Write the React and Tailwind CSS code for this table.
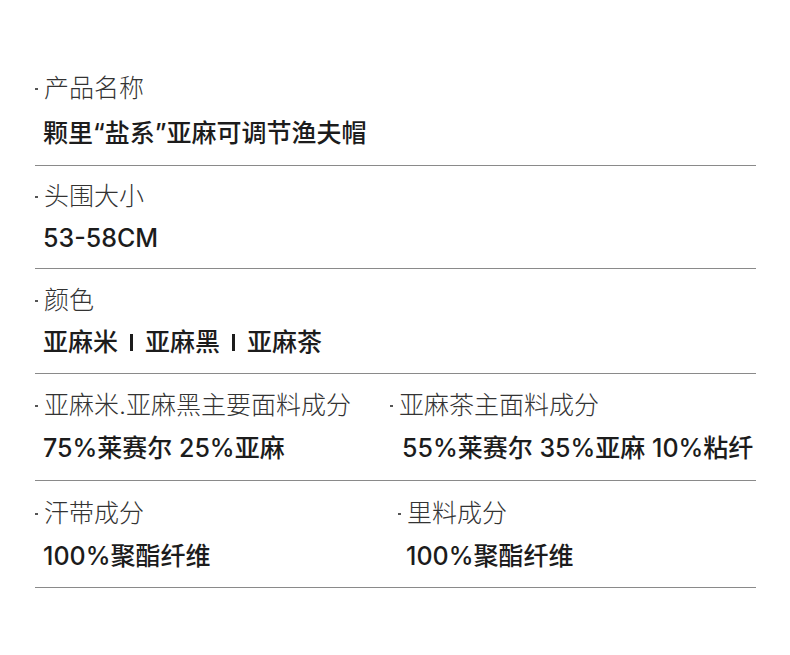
import React from 'react';

const font = { fontFamily: 'Inter, "Noto Sans CJK SC", sans-serif' };

const Label = ({ children }) => (
    <div className="flex items-center text-[25px] leading-[24px] font-light text-[#333]">
        <span className="w-[3px] h-[2px] bg-[#555] mr-[6px] mt-[1px]"></span>
        <span>{children}</span>
    </div>
);

const Value = ({ children }) => (
    <div className="text-[25px] leading-[24px] font-medium text-[#1c1c1c] whitespace-nowrap">{children}</div>
);

const Bar = () => <span className="block w-[3px] h-[17px] mx-[12px] mt-[1px] bg-[#1c1c1c]"></span>;

const App = () => {
    return (
        <div className="w-[790px] h-[655px] bg-white" style={font}>
            <div className="ml-[35px] w-[721px] pt-[76px]">
                {/* 产品名称 */}
                <div className="flex flex-col gap-[21px] pb-[20px] border-b border-[#8a8a8a]">
                    <Label>产品名称</Label>
                    <div className="pl-[8px]"><Value>颗里“盐系”亚麻可调节渔夫帽</Value></div>
                </div>

                <div className="flex flex-col gap-[18px] pt-[18px] pb-[18px] border-b border-[#8a8a8a]">
                    <Label>头围大小</Label>
                    <div className="pl-[8px]"><Value>53-58CM</Value></div>
                </div>

                <div className="flex flex-col gap-[18px] pt-[19px] pb-[19px] border-b border-[#8a8a8a]">
                    <Label>颜色</Label>
                    <div className="pl-[8px] flex items-center text-[25px] leading-[24px] font-medium text-[#1c1c1c]">
                        <span>亚麻米</span>
                        <Bar />
                        <span>亚麻黑</span>
                        <Bar />
                        <span>亚麻茶</span>
                    </div>
                </div>

                {/* 面料成分 */}
                <div className="grid grid-cols-[355px_1fr] pt-[19px] pb-[20px] border-b border-[#8a8a8a]">
                    <div className="flex flex-col gap-[19px]">
                        <Label>亚麻米.亚麻黑主要面料成分</Label>
                        <div className="pl-[8px]"><Value>75%莱赛尔 25%亚麻</Value></div>
                    </div>
                    <div className="flex flex-col gap-[19px]">
                        <Label>亚麻茶主面料成分</Label>
                        <div className="pl-[12px]"><Value>55%莱赛尔 35%亚麻 10%粘纤</Value></div>
                    </div>
                </div>

                <div className="grid grid-cols-[363px_1fr] pt-[20px] pb-[19px] border-b border-[#8a8a8a]">
                    <div className="flex flex-col gap-[19px]">
                        <Label>汗带成分</Label>
                        <div className="pl-[8px]"><Value>100%聚酯纤维</Value></div>
                    </div>
                    <div className="flex flex-col gap-[19px]">
                        <Label>里料成分</Label>
                        <div className="pl-[8px]"><Value>100%聚酯纤维</Value></div>
                    </div>
                </div>
            </div>
        </div>
    );
};

export default App;
